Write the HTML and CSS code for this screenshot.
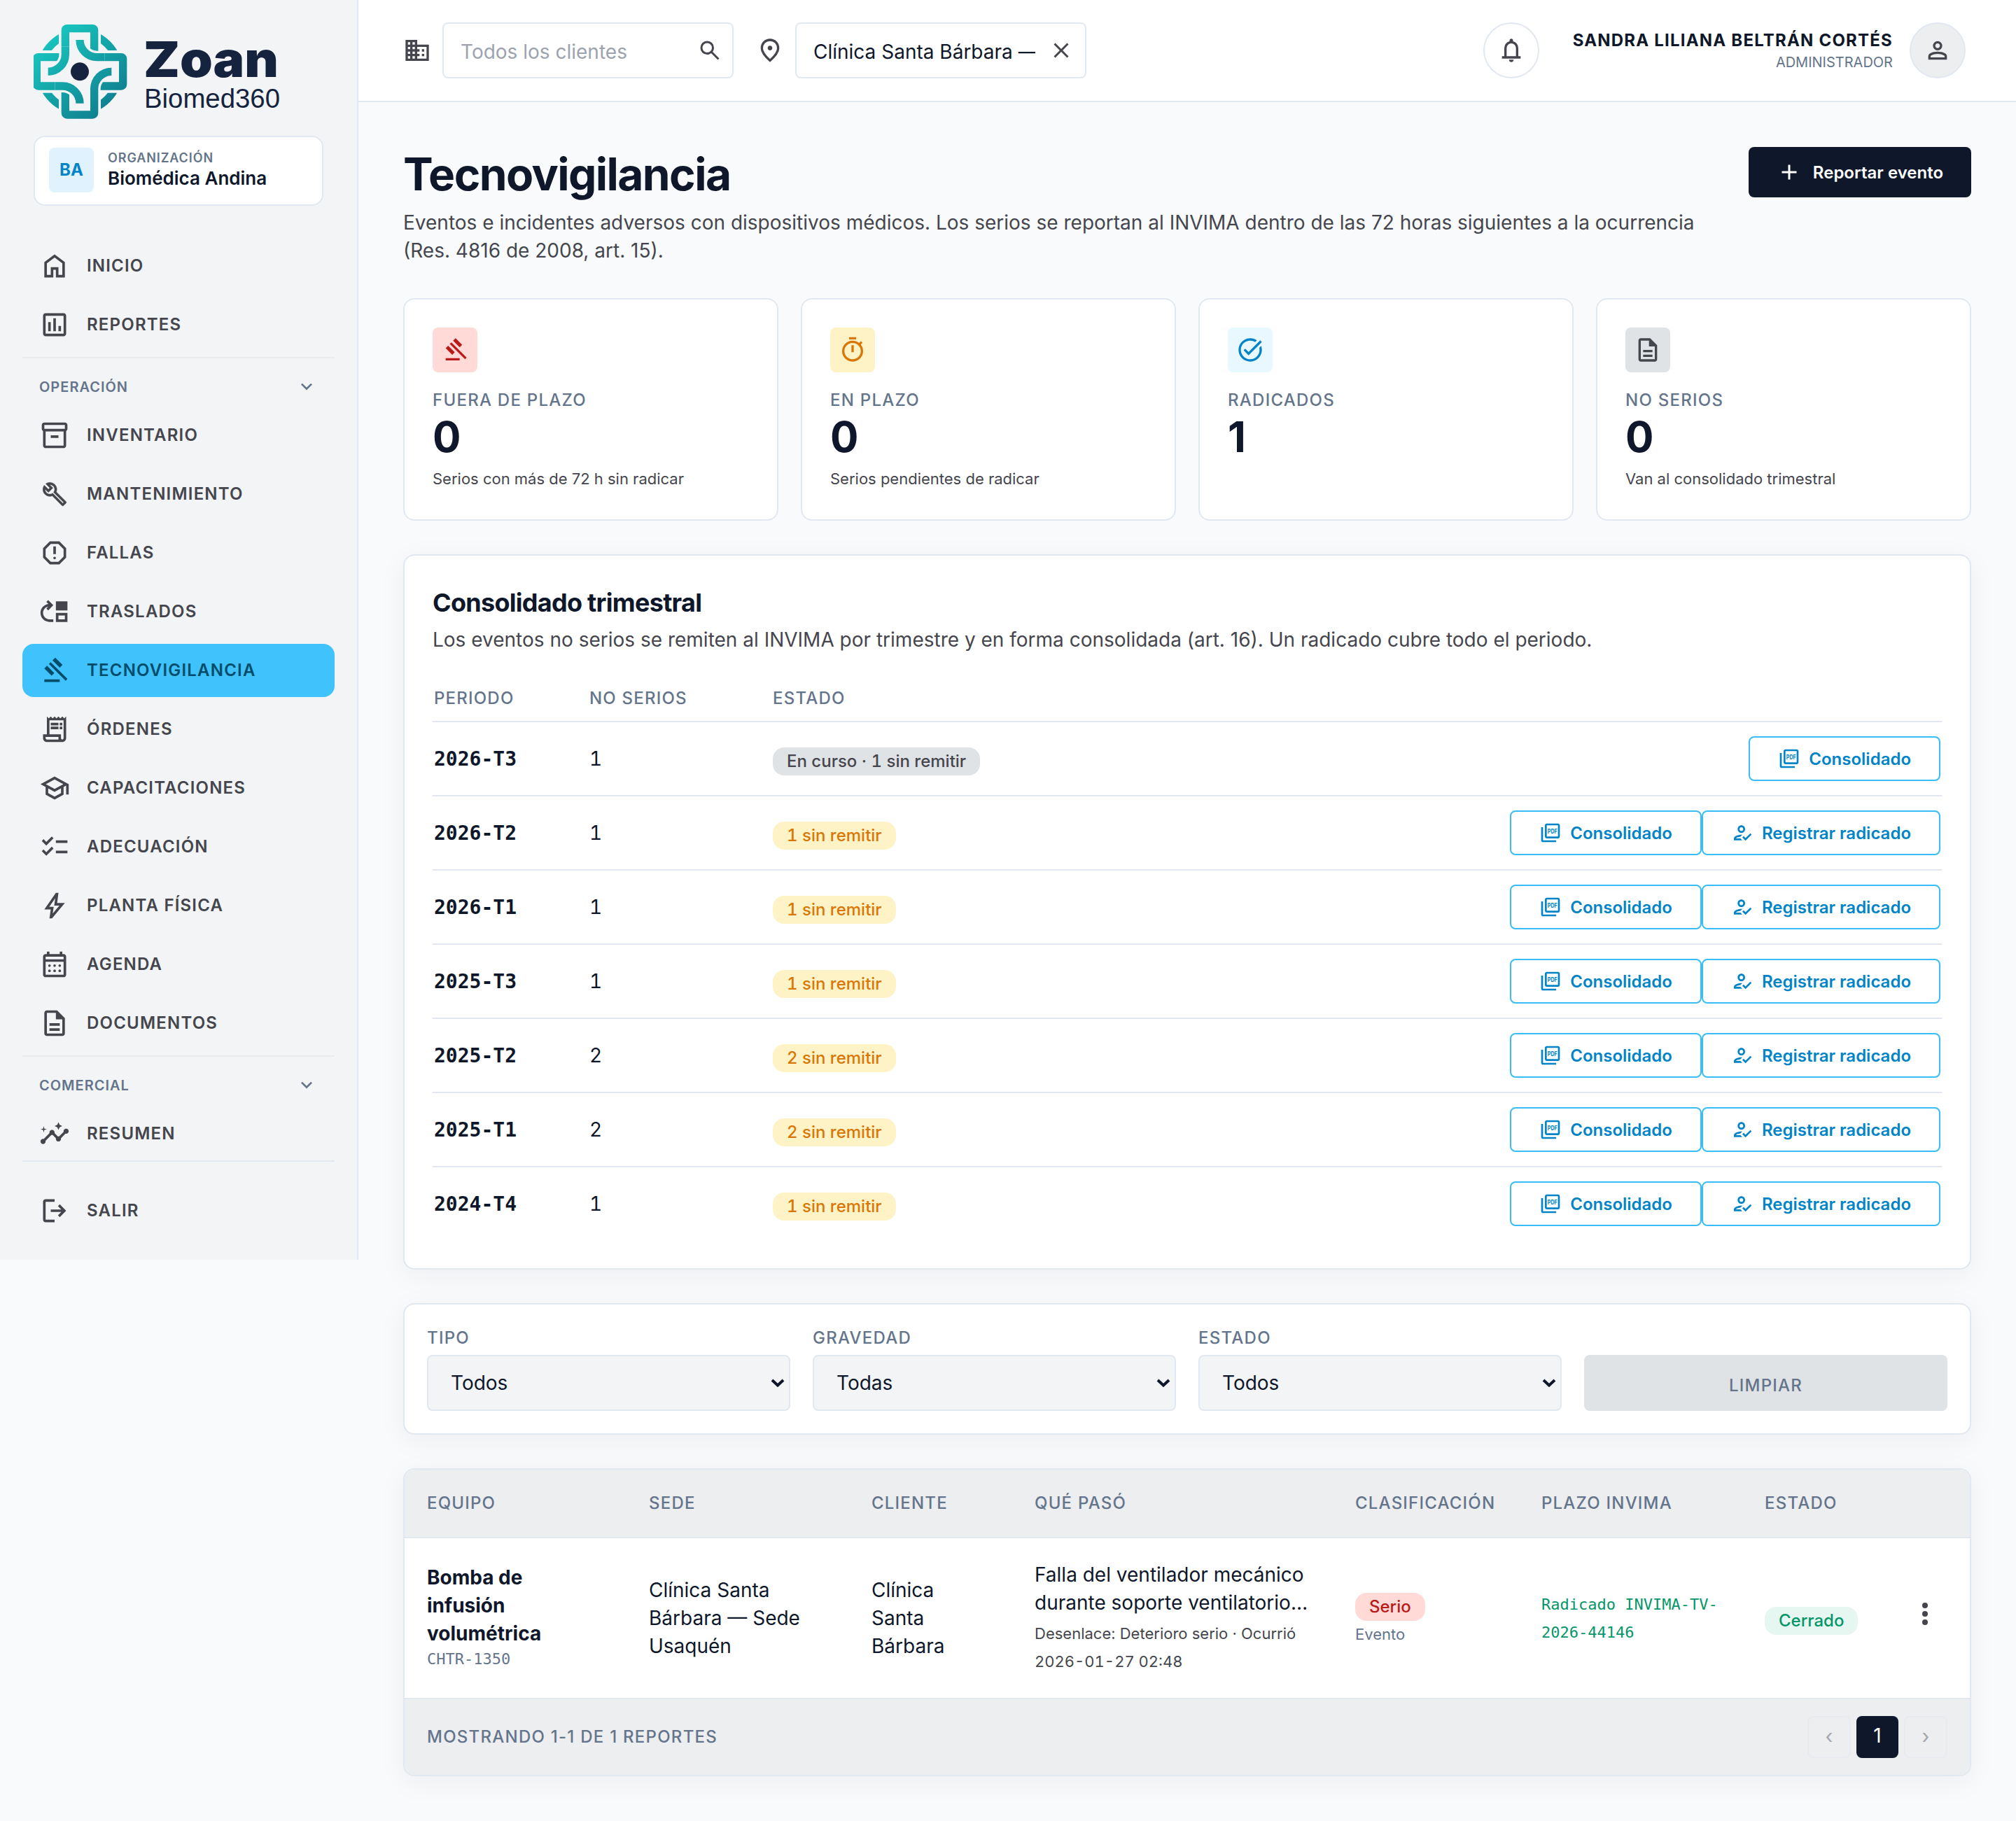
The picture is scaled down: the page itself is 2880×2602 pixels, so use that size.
FILE: index.html
```html
<!DOCTYPE html>
<html lang="es">
<head>
    <meta charset="UTF-8">
    <meta name="viewport" content="width=device-width, initial-scale=1.0">
    <title>Tecnovigilancia</title>
    <link rel="stylesheet" href="styles.css">
</head>
<body>

<!-- Iconos -->
<svg class="sprite" width="0" height="0">
    <symbol id="i-home" viewBox="0 0 24 24"><path d="M6 19h3v-6h6v6h3v-9l-6-4.5L6 10v9Zm-2 2V9l8-6 8 6v12h-7v-6h-2v6H4Z"/></symbol>
    <symbol id="i-chart" viewBox="0 0 24 24"><path d="M19 3H5c-1.100 0-2 .9-2 2v14c0 1.100.9 2 2 2h14c1.100 0 2-.9 2-2V5c0-1.100-.9-2-2-2zm0 16H5V5h14v14zM7 10h2v7H7zM11 7h2v10h-2zM15 13h2v4h-2z"/></symbol>
    <symbol id="i-box" viewBox="0 0 24 24"><path d="M20 2H4c-1 0-2 .9-2 2v3.010c0 .72.43 1.340 1 1.690V20c0 1.100 1.100 2 2 2h14c.9 0 2-.9 2-2V8.700c.57-.35 1-.97 1-1.690V4c0-1.100-1-2-2-2zm-1 18H5V9h14v11zm1-13H4V4h16v3zM9 12h6v2H9z"/></symbol>
    <symbol id="i-build" viewBox="0 0 24 24"><path transform="translate(2.100 2.100) scale(.83)" d="M22.610 18.990l-9.080-9.080c.93-2.340.45-5.100-1.440-7C9.790.61 6.210.4 3.660 2.260L7.500 6.110 6.080 7.520 2.250 3.690C.39 6.230.6 9.820 2.900 12.110c1.860 1.860 4.570 2.350 6.890 1.480l9.110 9.110c.39.39 1.020.39 1.410 0l2.300-2.300c.4-.38.4-1.010 0-1.410zm-3 1.600l-9.460-9.460c-.61.45-1.290.72-2 .82-1.360.2-2.790-.21-3.830-1.250C3.370 9.760 2.930 8.500 3 7.260l3.090 3.090 4.240-4.240-3.090-3.090c1.240-.07 2.490.37 3.440 1.310 1.080 1.080 1.490 2.570 1.240 3.960-.12.71-.42 1.370-.88 1.960l9.450 9.450-.88.89z" stroke="currentColor" stroke-width=".4"/></symbol>
    <symbol id="i-report" viewBox="0 0 24 24"><path d="M15.730 3H8.270L3 8.270v7.460L8.270 21h7.460L21 15.730V8.270L15.730 3zM19 14.900L14.900 19H9.100L5 14.900V9.100L9.100 5h5.800L19 9.100v5.800zM11 7h2v6h-2z"/><circle cx="12" cy="16" r="1"/></symbol>
    <symbol id="i-move" viewBox="0 0 24 24"><path d="M3 13c0-2.450 1.760-4.470 4.080-4.910L5.590 9.590 7 11l4-4.010L7 3 5.590 4.410l1.580 1.580v.06C3.700 6.460 1 9.420 1 13c0 3.870 3.130 7 7 7h3v-2H8c-2.760 0-5-2.240-5-5zM13 13v7h9v-7h-9zm7 5h-5v-3h5v3zM13 4h9v7h-9z"/></symbol>
    <symbol id="i-gavel" viewBox="0 0 24 24"><path d="M4 21v-2h12v2H4Zm5.650-4.850L4 10.500l2.100-2.150L11.800 14l-2.150 2.150Zm6.350-6.350L10.350 4.100 12.500 2l5.650 5.650L16 9.800ZM20.600 20 7.550 6.950l1.400-1.400L22 18.600 20.600 20Z"/></symbol>
    <symbol id="i-receipt" viewBox="0 0 24 24"><path d="M19.500 3.500L18 2l-1.500 1.500L15 2l-1.500 1.500L12 2l-1.500 1.500L9 2 7.500 3.500 6 2v14H3v3c0 1.660 1.340 3 3 3h12c1.660 0 3-1.340 3-3V2l-1.500 1.500zM15 20H6c-.55 0-1-.45-1-1v-1h10v2zm4-1c0 .55-.45 1-1 1s-1-.45-1-1v-3H8V5h11v14zM9 7h6v2H9zm7 0h2v2h-2zm-7 3h6v2H9zm7 0h2v2h-2z"/></symbol>
    <symbol id="i-school" viewBox="0 0 24 24"><path d="M12 3L1 9l4 2.180v6L12 21l7-3.820v-6l2-1.090V17h2V9L12 3zm6.820 6L12 12.720 5.180 9 12 5.280 18.820 9zM17 15.990l-5 2.730-5-2.730v-3.720L12 15l5-2.730v3.720z"/></symbol>
    <symbol id="i-checklist" viewBox="0 0 24 24"><path d="M22 7h-9v2h9V7zm0 8h-9v2h9v-2zM5.540 11L2 7.460l1.410-1.410 2.120 2.120 4.240-4.240 1.410 1.410L5.540 11zm0 8L2 15.460l1.410-1.410 2.120 2.120 4.240-4.240 1.410 1.410L5.540 19z"/></symbol>
    <symbol id="i-bolt" viewBox="0 0 24 24"><path d="m10.550 18.200 5.175-6.200h-4l.725-5.675L7.825 13H11.300l-.75 5.200ZM8 22l1-7H4l9-13h2l-1 8h6L10 22H8Z"/></symbol>
    <symbol id="i-calendar" viewBox="0 0 24 24"><path d="M19 4h-1V2h-2v2H8V2H6v2H5c-1.110 0-2 .9-2 2v14c0 1.100.89 2 2 2h14c1.100 0 2-.9 2-2V6c0-1.100-.9-2-2-2zm0 16H5V10h14v10zm0-12H5V6h14v2z"/><circle cx="8" cy="13" r="1"/><circle cx="12" cy="13" r="1"/><circle cx="16" cy="13" r="1"/><circle cx="8" cy="17" r="1"/><circle cx="12" cy="17" r="1"/><circle cx="16" cy="17" r="1"/></symbol>
    <symbol id="i-doc" viewBox="0 0 24 24"><path d="M8 18h8v-2H8v2Zm0-4h8v-2H8v2Zm-2 8q-.825 0-1.412-.587T4 20V4q0-.825.588-1.413T6 2h8l6 6v12q0 .825-.587 1.413T18 22H6Zm7-13V4H6v16h12V9h-5Z"/></symbol>
    <symbol id="i-insights" viewBox="0 0 24 24"><path d="M21 8c-1.450 0-2.260 1.440-1.930 2.510l-3.550 3.560c-.3-.09-.74-.09-1.040 0l-2.550-2.550C12.270 10.450 11.460 9 10 9c-1.450 0-2.270 1.440-1.930 2.520l-4.560 4.550C2.440 15.740 1 16.550 1 18c0 1.100.9 2 2 2 1.450 0 2.260-1.440 1.930-2.510l4.550-4.560c.3.09.74.09 1.040 0l2.550 2.550C12.730 16.550 13.540 18 15 18c1.450 0 2.270-1.440 1.930-2.520l3.560-3.550c1.070.33 2.510-.48 2.510-1.930 0-1.100-.9-2-2-2zM15 9l.94-2.070L18 6l-2.060-.93L15 3l-.92 2.070L12 6l2.080.93zM3.500 11L4 9l2-.5L4 8l-.5-2L3 8l-2 .5L3 9z"/></symbol>
    <symbol id="i-logout" viewBox="0 0 24 24"><path d="M5 21q-.825 0-1.412-.587T3 19V5q0-.825.588-1.413T5 3h7v2H5v14h7v2H5Zm11-4-1.375-1.450 2.550-2.550H9v-2h8.175l-2.550-2.550L16 7l5 5-5 5Z"/></symbol>
    <symbol id="i-down" viewBox="0 0 24 24"><path d="m12 15.400-6-6L7.400 8l4.600 4.600L16.600 8 18 9.400l-6 6Z"/></symbol>
    <symbol id="i-domain" viewBox="0 0 24 24"><path d="M12 7V3H2v18h20V7H12zM6 19H4v-2h2v2zm0-4H4v-2h2v2zm0-4H4V9h2v2zm0-4H4V5h2v2zm4 12H8v-2h2v2zm0-4H8v-2h2v2zm0-4H8V9h2v2zm0-4H8V5h2v2zm10 12h-8v-2h2v-2h-2v-2h2v-2h-2V9h8v10zm-2-8h-2v2h2v-2zm0 4h-2v2h2v-2z"/></symbol>
    <symbol id="i-search" viewBox="0 0 24 24"><path d="m19.600 21-6.300-6.300q-.75.6-1.725.95T9.500 16q-2.725 0-4.612-1.888T3 9.500q0-2.725 1.888-4.612T9.500 3q2.725 0 4.612 1.888T16 9.500q0 1.100-.35 2.075T14.700 13.300l6.300 6.300-1.400 1.400ZM9.500 14q1.875 0 3.188-1.312T14 9.500q0-1.875-1.312-3.187T9.500 5Q7.625 5 6.313 6.313T5 9.500q0 1.875 1.313 3.188T9.500 14Z"/></symbol>
    <symbol id="i-pin" viewBox="0 0 24 24"><path d="M12 12q.825 0 1.413-.587T14 10q0-.825-.587-1.412T12 8q-.825 0-1.412.588T10 10q0 .825.588 1.413T12 12Zm0 7.350q3.050-2.800 4.525-5.087T18 10.200q0-2.725-1.738-4.462T12 4Q9.475 4 7.737 5.738T6 10.200q0 1.775 1.475 4.063T12 19.350ZM12 22q-4.025-3.425-6.012-6.362T4 10.200q0-3.750 2.413-5.975T12 2q3.175 0 5.588 2.225T20 10.200q0 2.500-1.987 5.438T12 22Z"/></symbol>
    <symbol id="i-close" viewBox="0 0 24 24"><path d="m6.400 19-1.400-1.400 5.600-5.600L5 6.400 6.400 5l5.600 5.600L17.600 5 19 6.400 13.400 12l5.600 5.600-1.400 1.400-5.600-5.600L6.400 19Z"/></symbol>
    <symbol id="i-bell" viewBox="0 0 24 24"><path d="M4 19v-2h2v-7q0-2.075 1.250-3.687T10.500 4.200v-.7q0-.625.438-1.062T12 2q.625 0 1.063.438T13.500 3.500v.7q2 .5 3.250 2.113T18 10v7h2v2H4Zm8 3q-.825 0-1.412-.587T10 20h4q0 .825-.587 1.413T12 22Zm-4-5h8v-7q0-1.650-1.175-2.825T12 6q-1.650 0-2.825 1.175T8 10v7Z"/></symbol>
    <symbol id="i-person" viewBox="0 0 24 24"><path d="M12 12q-1.650 0-2.825-1.175T8 8q0-1.650 1.175-2.825T12 4q1.650 0 2.825 1.175T16 8q0 1.650-1.175 2.825T12 12Zm-8 8v-2.800q0-.85.438-1.562T5.600 14.550q1.550-.775 3.150-1.163T12 13q1.650 0 3.250.388t3.150 1.162q.725.375 1.163 1.088T20 17.200V20H4Zm2-2h12v-.8q0-.275-.137-.5t-.363-.35q-1.350-.675-2.725-1.012T12 15q-1.400 0-2.775.338T6.500 16.350q-.225.125-.363.35T6 17.200v.8Zm6-8q.825 0 1.413-.587T14 8q0-.825-.587-1.412T12 6q-.825 0-1.412.588T10 8q0 .825.588 1.413T12 10Z"/></symbol>
    <symbol id="i-add" viewBox="0 0 24 24"><path d="M11 19v-6H5v-2h6V5h2v6h6v2h-6v6h-2Z"/></symbol>
    <symbol id="i-timer" viewBox="0 0 24 24"><path d="M9 1h6v2H9zM11 8h2v6h-2zM19.030 7.390l1.420-1.420c-.43-.51-.9-.99-1.410-1.410l-1.420 1.420C16.070 4.740 14.120 4 12 4c-4.970 0-9 4.030-9 9s4.020 9 9 9 9-4.030 9-9c0-2.120-.74-4.070-1.970-5.610zM12 20c-3.870 0-7-3.130-7-7s3.130-7 7-7 7 3.130 7 7-3.130 7-7 7z"/></symbol>
    <symbol id="i-task" viewBox="0 0 24 24"><path d="M22 5.180L10.590 16.600l-4.240-4.240 1.410-1.410 2.830 2.830 10-10L22 5.180zm-2.210 5.040c.13.57.21 1.170.21 1.780 0 4.420-3.580 8-8 8s-8-3.580-8-8 3.580-8 8-8c1.580 0 3.040.46 4.280 1.250l1.440-1.440C16.100 2.670 14.130 2 12 2 6.480 2 2 6.480 2 12s4.480 10 10 10 10-4.480 10-10c0-1.190-.22-2.330-.6-3.390l-1.610 1.610z"/></symbol>
    <symbol id="i-pdf" viewBox="0 0 24 24"><path d="M20 2H8c-1.100 0-2 .9-2 2v12c0 1.100.9 2 2 2h12c1.100 0 2-.9 2-2V4c0-1.100-.9-2-2-2zm0 14H8V4h12v12zM4 6H2v14c0 1.100.9 2 2 2h14v-2H4V6z"/><text x="8.900" y="12.600" font-size="7" font-weight="700" textLength="10.400" lengthAdjust="spacingAndGlyphs">PDF</text></symbol>
    <symbol id="i-reg" viewBox="0 0 24 24"><path d="M11 12c2.210 0 4-1.790 4-4s-1.790-4-4-4-4 1.790-4 4 1.790 4 4 4zm0-6c1.100 0 2 .9 2 2s-.9 2-2 2-2-.9-2-2 .9-2 2-2zM5 18c.2-.63 2.570-1.680 4.960-1.940l2.040-2c-.39-.04-.68-.06-1-.06-2.670 0-8 1.340-8 4v2h9l-2-2H5zm15.600-5.500l-5.130 5.170-2.070-2.080L12 17l3.470 3.500L22 13.910z"/></symbol>
    <symbol id="i-more" viewBox="0 0 24 24"><circle cx="12" cy="6" r="2"/><circle cx="12" cy="12" r="2"/><circle cx="12" cy="18" r="2"/></symbol>
    <symbol id="i-arrow" viewBox="0 0 20 12"><path d="M2 2 10 9.500l8-7.500" fill="none" stroke="currentColor" stroke-width="4"/></symbol>
</svg>

<div class="layout">

    <!-- Menú lateral -->
    <aside class="sidebar">
        <svg class="logo" viewBox="0 0 420 150" width="420" height="150">
            <defs>
                <linearGradient id="logoGrad" gradientUnits="userSpaceOnUse" x1="200" y1="140" x2="490" y2="480">
                    <stop offset="0" stop-color="#19c8c0"/>
                    <stop offset="1" stop-color="#0f7c8d"/>
                </linearGradient>
                <clipPath id="logoCorners">
                    <path d="M144 105h108v111H144zM432 105h110v111H432zM144 398h108v112H144zM432 398h110v112H432z"/>
                </clipPath>
                <path id="logoArm" d="M280 233V130q0-8 8-8h108q8 0 8 8V240"/>
                <path id="logoBend" d="M206 307A74 74 0 0 0 280 233V200"/>
                <mask id="logoMask" maskUnits="userSpaceOnUse" x="130" y="95" width="430" height="430">
                    <circle cx="342" cy="307" r="167" fill="none" stroke="#fff" stroke-width="33" clip-path="url(#logoCorners)"/>
                    <g fill="none" stroke="#fff" stroke-width="34">
                        <use href="#logoArm"/>
                        <use href="#logoArm" transform="rotate(90 342 307)"/>
                        <use href="#logoArm" transform="rotate(180 342 307)"/>
                        <use href="#logoArm" transform="rotate(270 342 307)"/>
                    </g>
                    <g fill="none" stroke="#000" stroke-width="54">
                        <use href="#logoBend"/>
                        <use href="#logoBend" transform="rotate(90 342 307)"/>
                        <use href="#logoBend" transform="rotate(180 342 307)"/>
                        <use href="#logoBend" transform="rotate(270 342 307)"/>
                    </g>
                    <g fill="none" stroke="#fff" stroke-width="34">
                        <use href="#logoBend"/>
                        <use href="#logoBend" transform="rotate(90 342 307)"/>
                        <use href="#logoBend" transform="rotate(180 342 307)"/>
                        <use href="#logoBend" transform="rotate(270 342 307)"/>
                    </g>
                </mask>
            </defs>
            <g transform="scale(.3333) translate(-144 -84)">
                <rect x="130" y="95" width="430" height="430" fill="url(#logoGrad)" mask="url(#logoMask)"/>
                <circle cx="342" cy="307" r="39" fill="#16233f"/>
            </g>
            <text class="logo-name" x="157" y="82" textLength="193" lengthAdjust="spacingAndGlyphs">Zoan</text>
            <text class="logo-sub" x="158" y="126" textLength="194" lengthAdjust="spacingAndGlyphs">Biomed360</text>
        </svg>

        <div class="org">
            <div class="org-avatar">BA</div>
            <div>
                <div class="org-label">ORGANIZACIÓN</div>
                <div class="org-name">Biomédica Andina</div>
            </div>
        </div>

        <nav class="nav">
            <a class="nav-item"><svg><use href="#i-home"/></svg>INICIO</a>
            <a class="nav-item"><svg><use href="#i-chart"/></svg>REPORTES</a>
            <div class="nav-group">OPERACIÓN <svg><use href="#i-down"/></svg></div>
            <a class="nav-item"><svg><use href="#i-box"/></svg>INVENTARIO</a>
            <a class="nav-item"><svg><use href="#i-build"/></svg>MANTENIMIENTO</a>
            <a class="nav-item"><svg><use href="#i-report"/></svg>FALLAS</a>
            <a class="nav-item"><svg><use href="#i-move"/></svg>TRASLADOS</a>
            <a class="nav-item active"><svg><use href="#i-gavel"/></svg>TECNOVIGILANCIA</a>
            <a class="nav-item"><svg><use href="#i-receipt"/></svg>ÓRDENES</a>
            <a class="nav-item"><svg><use href="#i-school"/></svg>CAPACITACIONES</a>
            <a class="nav-item"><svg><use href="#i-checklist"/></svg>ADECUACIÓN</a>
            <a class="nav-item"><svg><use href="#i-bolt"/></svg>PLANTA FÍSICA</a>
            <a class="nav-item"><svg><use href="#i-calendar"/></svg>AGENDA</a>
            <a class="nav-item"><svg><use href="#i-doc"/></svg>DOCUMENTOS</a>
            <div class="nav-group">COMERCIAL <svg><use href="#i-down"/></svg></div>
            <a class="nav-item"><svg><use href="#i-insights"/></svg>RESUMEN</a>
        </nav>
        <div class="nav-footer">
            <a class="nav-item"><svg><use href="#i-logout"/></svg>SALIR</a>
        </div>
    </aside>

    <div class="page">

        <!-- Barra superior -->
        <header class="topbar">
            <svg class="topbar-icon"><use href="#i-domain"/></svg>
            <div class="picker empty"><span>Todos los clientes</span><svg><use href="#i-search"/></svg></div>
            <svg class="topbar-icon pin"><use href="#i-pin"/></svg>
            <div class="picker"><span>Clínica Santa Bárbara —</span><svg><use href="#i-close"/></svg></div>
            <div class="round bell"><svg><use href="#i-bell"/></svg></div>
            <div class="user">
                <div class="user-name">SANDRA LILIANA BELTRÁN CORTÉS</div>
                <div class="user-role">ADMINISTRADOR</div>
            </div>
            <div class="round filled"><svg><use href="#i-person"/></svg></div>
        </header>

        <main class="content">
            <div class="title-row">
                <div class="title-text">
                    <h1>Tecnovigilancia</h1>
                    <p>Eventos e incidentes adversos con dispositivos médicos. Los serios se reportan al INVIMA dentro de las 72 horas siguientes a la ocurrencia<br>(Res. 4816 de 2008, art. 15).</p>
                </div>
                <button class="btn-primary"><svg><use href="#i-add"/></svg>Reportar evento</button>
            </div>

            <!-- Indicadores -->
            <section class="cards">
                <div class="card">
                    <div class="card-icon red"><svg><use href="#i-gavel"/></svg></div>
                    <div class="card-label">FUERA DE PLAZO</div>
                    <div class="card-value">0</div>
                    <div class="card-note">Serios con más de 72 h sin radicar</div>
                </div>
                <div class="card">
                    <div class="card-icon amber"><svg><use href="#i-timer"/></svg></div>
                    <div class="card-label">EN PLAZO</div>
                    <div class="card-value">0</div>
                    <div class="card-note">Serios pendientes de radicar</div>
                </div>
                <div class="card">
                    <div class="card-icon blue"><svg><use href="#i-task"/></svg></div>
                    <div class="card-label">RADICADOS</div>
                    <div class="card-value">1</div>
                </div>
                <div class="card">
                    <div class="card-icon gray"><svg><use href="#i-doc"/></svg></div>
                    <div class="card-label">NO SERIOS</div>
                    <div class="card-value">0</div>
                    <div class="card-note">Van al consolidado trimestral</div>
                </div>
            </section>

            <!-- Consolidado trimestral -->
            <section class="panel quarter">
                <h2>Consolidado trimestral</h2>
                <p>Los eventos no serios se remiten al INVIMA por trimestre y en forma consolidada (art. 16). Un radicado cubre todo el periodo.</p>
                <div class="q-row q-head"><span>PERIODO</span><span>NO SERIOS</span><span>ESTADO</span></div>
                <div class="q-row">
                    <b>2026-T3</b><span>1</span><span><i class="badge gray">En curso · 1 sin remitir</i></span>
                    <div class="q-actions"><button><svg><use href="#i-pdf"/></svg>Consolidado</button></div>
                </div>
                <div class="q-row">
                    <b>2026-T2</b><span>1</span><span><i class="badge amber">1 sin remitir</i></span>
                    <div class="q-actions"><button><svg><use href="#i-pdf"/></svg>Consolidado</button><button><svg><use href="#i-reg"/></svg>Registrar radicado</button></div>
                </div>
                <div class="q-row">
                    <b>2026-T1</b><span>1</span><span><i class="badge amber">1 sin remitir</i></span>
                    <div class="q-actions"><button><svg><use href="#i-pdf"/></svg>Consolidado</button><button><svg><use href="#i-reg"/></svg>Registrar radicado</button></div>
                </div>
                <div class="q-row">
                    <b>2025-T3</b><span>1</span><span><i class="badge amber">1 sin remitir</i></span>
                    <div class="q-actions"><button><svg><use href="#i-pdf"/></svg>Consolidado</button><button><svg><use href="#i-reg"/></svg>Registrar radicado</button></div>
                </div>
                <div class="q-row">
                    <b>2025-T2</b><span>2</span><span><i class="badge amber">2 sin remitir</i></span>
                    <div class="q-actions"><button><svg><use href="#i-pdf"/></svg>Consolidado</button><button><svg><use href="#i-reg"/></svg>Registrar radicado</button></div>
                </div>
                <div class="q-row">
                    <b>2025-T1</b><span>2</span><span><i class="badge amber">2 sin remitir</i></span>
                    <div class="q-actions"><button><svg><use href="#i-pdf"/></svg>Consolidado</button><button><svg><use href="#i-reg"/></svg>Registrar radicado</button></div>
                </div>
                <div class="q-row">
                    <b>2024-T4</b><span>1</span><span><i class="badge amber">1 sin remitir</i></span>
                    <div class="q-actions"><button><svg><use href="#i-pdf"/></svg>Consolidado</button><button><svg><use href="#i-reg"/></svg>Registrar radicado</button></div>
                </div>
            </section>

            <!-- Filtros -->
            <section class="panel filters">
                <div><label>TIPO</label><div class="select">Todos<svg><use href="#i-arrow"/></svg></div></div>
                <div><label>GRAVEDAD</label><div class="select">Todas<svg><use href="#i-arrow"/></svg></div></div>
                <div><label>ESTADO</label><div class="select">Todos<svg><use href="#i-arrow"/></svg></div></div>
                <button class="btn-clear">LIMPIAR</button>
            </section>

            <!-- Listado de reportes -->
            <section class="panel reports">
                <div class="r-row r-head">
                    <span>EQUIPO</span><span>SEDE</span><span>CLIENTE</span><span>QUÉ PASÓ</span><span>CLASIFICACIÓN</span><span>PLAZO INVIMA</span><span>ESTADO</span><span></span>
                </div>
                <div class="r-row r-body">
                    <div class="equipo"><b>Bomba de<br>infusión<br>volumétrica</b><code>CHTR-1350</code></div>
                    <div>Clínica Santa<br>Bárbara — Sede<br>Usaquén</div>
                    <div>Clínica<br>Santa<br>Bárbara</div>
                    <div>Falla del ventilador mecánico<br>durante soporte ventilatorio…<small>Desenlace: Deterioro serio · Ocurrió<br><span class="fecha">2026-01-27 02:48</span></small></div>
                    <div class="clasif"><i class="badge red">Serio</i><em>Evento</em></div>
                    <div class="plazo">Radicado INVIMA-TV-<br>2026-44146</div>
                    <div><i class="badge green">Cerrado</i></div>
                    <div class="more"><svg><use href="#i-more"/></svg></div>
                </div>
                <div class="r-foot">
                    <span>MOSTRANDO 1-1 DE 1 REPORTES</span>
                    <div class="pager"><button class="off">‹</button><button class="current">1</button><button class="off">›</button></div>
                </div>
            </section>
        </main>
    </div>
</div>

</body>
</html>
```

FILE: styles.css
```css
/* Estilos Generales */
* {
    box-sizing: border-box;
}

body {
    margin: 0;
    background: #f8fafc;
    color: #0f172a;
    font-family: Inter, "Liberation Sans", sans-serif;
    font-size: 28px;
    line-height: 40px;
}

svg {
    fill: currentColor;
    flex: none;
}

button {
    font-family: inherit;
    margin: 0;
}

.sprite {
    display: none;
}

.layout {
    display: flex;
    align-items: flex-start;
    height: 2602px;
    overflow: hidden;
}

/* Menú lateral */
.sidebar {
    width: 512px;
    height: 1800px;
    flex: none;
    background: #f2f4f6;
    border-right: 2px solid #e2e8f0;
    padding: 28px 32px 0;
    color: #45464d;
}

.logo {
    display: block;
    margin-left: 16px;
}

.logo-name {
    font-size: 70px;
    font-weight: 900;
    fill: #16233f;
}

.logo-sub {
    font-family: "Liberation Sans", Arial, sans-serif;
    font-size: 38px;
    fill: #16233f;
}

.org {
    display: flex;
    align-items: center;
    gap: 20px;
    height: 100px;
    margin: 16px 16px 48px;
    padding: 0 20px 2px;
    background: #fff;
    border: 2px solid #e2e8f0;
    border-radius: 16px;
}

.org-avatar {
    width: 64px;
    height: 64px;
    border-radius: 8px;
    background: #e0f2fe;
    color: #0284c7;
    font-size: 24px;
    font-weight: 700;
    line-height: 64px;
    text-align: center;
}

.org-label {
    color: #64748b;
    font-size: 18px;
    font-weight: 600;
    letter-spacing: 0.9px;
    line-height: 24px;
}

.org-name {
    color: #0f172a;
    font-size: 26px;
    font-weight: 600;
    line-height: 34px;
}

.nav {
    display: flex;
    flex-direction: column;
    gap: 8px;
}

.nav-item {
    display: flex;
    align-items: center;
    gap: 24px;
    height: 76px;
    padding: 0 24px;
    border-radius: 16px;
    font-size: 24px;
    font-weight: 600;
    letter-spacing: 1.2px;
}

.nav-item svg {
    width: 44px;
    height: 44px;
}

.nav-item.active {
    background: #40c2fd;
    color: #004d6a;
}

.nav-group {
    display: flex;
    align-items: center;
    justify-content: space-between;
    height: 66px;
    padding: 17px 24px 0;
    border-top: 2px solid #e9ebee;
    color: #64748b;
    font-size: 20px;
    font-weight: 600;
    letter-spacing: 1px;
}

.nav-group svg {
    width: 32px;
    height: 32px;
}

.nav-footer {
    border-top: 2px solid #e2e8f0;
    padding-top: 32px;
}

/* Barra superior */
.page {
    flex: 1;
}

.topbar {
    display: flex;
    align-items: center;
    height: 146px;
    padding: 0 72px 0 64px;
    background: #fff;
    border-bottom: 2px solid #e2e8f0;
    color: #45464d;
}

.topbar-icon {
    width: 40px;
    height: 40px;
    margin-right: 16px;
}

.topbar-icon.pin {
    margin-left: 32px;
}

.picker {
    display: flex;
    align-items: center;
    justify-content: space-between;
    width: 416px;
    height: 80px;
    padding: 3px 16px 0 24px;
    border: 2px solid #e2e8f0;
    border-radius: 8px;
}

.picker span {
    width: 317px;
    overflow: hidden;
    color: #0f172a;
    white-space: nowrap;
}

.picker.empty {
    padding-right: 14px;
}

.picker.empty span {
    color: #9ca3af;
}

.picker svg {
    width: 36px;
    height: 36px;
    margin-bottom: 3px;
}

.round {
    display: flex;
    align-items: center;
    justify-content: center;
    width: 80px;
    height: 80px;
    border: 2px solid #e2e8f0;
    border-radius: 50%;
}

.round.filled {
    background: #eceef0;
}

.round svg {
    width: 40px;
    height: 40px;
}

.round.bell {
    margin-left: auto;
}

.user {
    margin: 0 24px 0 48px;
    text-align: right;
}

.user-name {
    color: #0f172a;
    font-size: 24px;
    font-weight: 700;
    letter-spacing: 1.2px;
    line-height: 34px;
}

.user-role {
    color: #64748b;
    font-size: 20px;
    line-height: 28px;
}

/* Contenido */
.content {
    padding: 64px;
}

.title-row {
    display: flex;
    justify-content: space-between;
    align-items: flex-start;
}

h1 {
    margin: 0 0 11px;
    font-size: 64px;
    font-weight: 700;
    letter-spacing: -1.6px;
    line-height: 77px;
}

.title-text p {
    margin: 0;
    color: #45464d;
    white-space: nowrap;
}

.btn-primary {
    display: flex;
    align-items: center;
    gap: 16px;
    height: 72px;
    padding: 0 40px;
    border: 0;
    border-radius: 8px;
    background: #0f172a;
    color: #fff;
    font-size: 24px;
    font-weight: 600;
}

.btn-primary svg {
    width: 36px;
    height: 36px;
}

/* Indicadores */
.cards {
    display: grid;
    grid-template-columns: repeat(4, 1fr);
    gap: 32px;
    margin-top: 48px;
}

.card {
    height: 318px;
    padding: 40px;
    background: #fff;
    border: 2px solid #e2e8f0;
    border-radius: 16px;
}

.card-icon {
    display: flex;
    align-items: center;
    justify-content: center;
    width: 64px;
    height: 64px;
    border-radius: 8px;
}

.card-icon svg {
    width: 40px;
    height: 40px;
}

.card-icon.red {
    background: #ffdad6;
    color: #ba1a1a;
}

.card-icon.amber {
    background: #fef3c7;
    color: #d97706;
}

.card-icon.blue {
    background: #e9f7fe;
    color: #0284c7;
}

.card-icon.gray {
    background: #e0e3e5;
    color: #45464d;
}

.card-label {
    margin-top: 23px;
    color: #64748b;
    font-size: 24px;
    font-weight: 500;
    letter-spacing: 1.25px;
    line-height: 34px;
}

.card-value {
    margin-top: -1px;
    font-size: 60px;
    font-weight: 700;
    line-height: 72px;
}

.card-note {
    margin-top: 7px;
    color: #45464d;
    font-size: 22px;
    line-height: 35px;
}

/* Paneles */
.panel {
    margin-top: 48px;
    background: #fff;
    border: 2px solid #e2e8f0;
    border-radius: 16px;
    box-shadow: 0 8px 40px rgba(15, 23, 42, 0.05);
}

.quarter {
    height: 1022px;
    padding: 40px;
}

.quarter h2 {
    margin: 5px 0 11px;
    font-size: 36px;
    font-weight: 700;
    letter-spacing: -0.72px;
    line-height: 44px;
}

.quarter p {
    margin: 0 0 28px;
    color: #45464d;
    line-height: 40px;
}

.q-row {
    display: grid;
    grid-template-columns: 222px 262px 400px 1fr;
    align-items: center;
    height: 106px;
    padding: 0 2px;
    border-bottom: 2px solid #e2e8f0;
    font-variant-numeric: tabular-nums;
}

.q-row:last-child {
    border-bottom: 0;
    height: 104px;
}

.q-row b {
    padding-top: 1px;
    font-family: "DejaVu Sans Mono", "Liberation Mono", monospace;
    font-size: 28px;
}

.q-head {
    height: 70px;
    padding-top: 4px;
}

.q-head,
.r-head {
    color: #64748b;
    font-size: 24px;
    font-weight: 500;
    letter-spacing: 1.2px;
}

.q-actions {
    display: flex;
    justify-content: flex-end;
}

.q-actions button {
    display: flex;
    align-items: center;
    gap: 12px;
    height: 64px;
    padding: 0 40px;
    background: #fff;
    border: 2px solid #38bdf8;
    border-radius: 8px;
    color: #0284c7;
    font-size: 24px;
    font-weight: 600;
    white-space: nowrap;
}

.q-actions svg {
    width: 32px;
    height: 32px;
}

.badge {
    display: inline-block;
    height: 40px;
    padding: 0 20px;
    border-radius: 16px;
    font-size: 24px;
    font-style: normal;
    font-weight: 500;
    line-height: 40px;
    vertical-align: top;
    margin-top: 8px;
}

.badge.gray {
    background: #e0e3e5;
    color: #45464d;
}

.badge.amber {
    background: #fef3c7;
    color: #d97706;
}

.badge.red {
    background: #ffdad6;
    color: #ba1a1a;
}

.badge.green {
    background: #e6f7f1;
    color: #059669;
}

/* Filtros */
.filters {
    display: grid;
    grid-template-columns: repeat(4, 1fr);
    gap: 32px;
    align-items: end;
    height: 188px;
    padding: 32px;
}

.filters label {
    display: block;
    margin-bottom: 9px;
    color: #64748b;
    font-size: 24px;
    font-weight: 500;
    letter-spacing: 1.25px;
    line-height: 31px;
}

.select {
    display: flex;
    align-items: center;
    justify-content: space-between;
    height: 80px;
    padding: 0 6px 0 32px;
    background: #f2f4f6;
    border: 2px solid #e2e8f0;
    border-radius: 8px;
}

.select svg {
    width: 20px;
    height: 12px;
}

.btn-clear {
    height: 80px;
    padding: 7px 0 0;
    border: 0;
    border-radius: 8px;
    background: #e0e3e5;
    color: #64748b;
    font-size: 24px;
    font-weight: 500;
    letter-spacing: 1.2px;
}

/* Listado */
.reports {
    overflow: hidden;
}

.r-row {
    display: grid;
    grid-template-columns: 317px 318px 233px 458px 266px 319px 1fr 88px;
    align-items: center;
    border-bottom: 2px solid #e2e8f0;
}

.r-row > * {
    padding-left: 32px;
}

.r-head {
    height: 98px;
    background: #eceef0;
}

.r-body {
    height: 230px;
}

.equipo {
    padding-bottom: 4px;
}

.equipo b {
    display: block;
    font-weight: 700;
}

.equipo code {
    display: block;
    color: #64748b;
    font-family: "DejaVu Sans Mono", "Liberation Mono", monospace;
    font-size: 22px;
    line-height: 33px;
}

.r-body small {
    display: block;
    margin-top: 4px;
    color: #45464d;
    font-size: 22px;
}

.fecha {
    font-variant-numeric: tabular-nums;
}

.clasif .badge {
    margin-top: 4px;
}

.clasif em {
    display: block;
    padding-top: 1px;
    color: #64748b;
    font-size: 22px;
    font-style: normal;
    line-height: 36px;
}

.plazo {
    padding-top: 2px;
    color: #059669;
    font-family: "DejaVu Sans Mono", "Liberation Mono", monospace;
    font-size: 22px;
    white-space: nowrap;
}

.r-row > .more {
    padding: 0 0 12px;
    line-height: 0;
    color: #45464d;
}

.more svg {
    width: 48px;
    height: 48px;
}

.r-foot {
    display: flex;
    align-items: center;
    justify-content: space-between;
    height: 108px;
    padding: 0 32px;
    background: #eceef0;
    color: #64748b;
    font-size: 24px;
    font-weight: 500;
    letter-spacing: 1.25px;
}

.pager {
    display: flex;
    gap: 8px;
}

.pager button {
    width: 60px;
    height: 60px;
    padding: 0 0 4px;
    border: 0;
    border-radius: 8px;
    font-size: 28px;
}

.pager .off {
    width: 62px;
    padding-bottom: 2px;
    background: none;
    border: 2px solid #e7eaee;
    color: #a3a5a9;
}

.pager .current {
    background: #0f172a;
    color: #fff;
}
```
